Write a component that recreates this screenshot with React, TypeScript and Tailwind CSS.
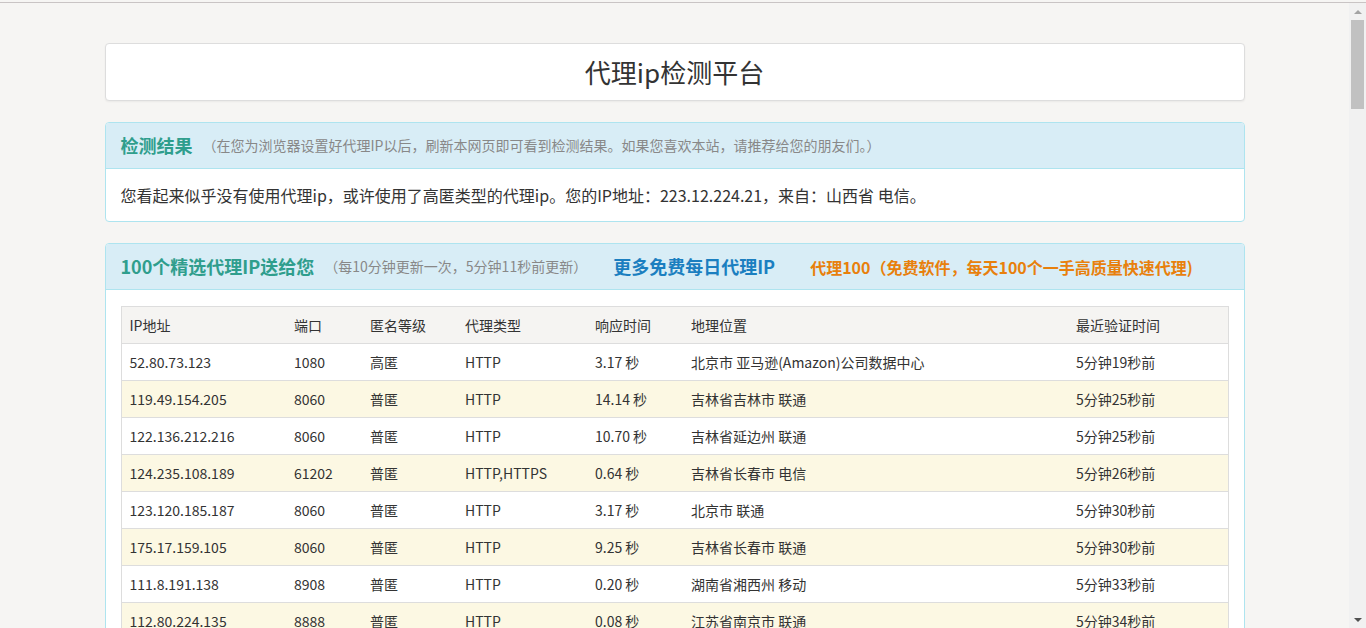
import React from 'react';

type ProxyRow = {
  ip: string;
  port: string;
  level: string;
  type: string;
  speed: string;
  location: string;
  checked: string;
};

const rows: ProxyRow[] = [
  { ip: '52.80.73.123', port: '1080', level: '高匿', type: 'HTTP', speed: '3.17 秒', location: '北京市 亚马逊(Amazon)公司数据中心', checked: '5分钟19秒前' },
  { ip: '119.49.154.205', port: '8060', level: '普匿', type: 'HTTP', speed: '14.14 秒', location: '吉林省吉林市 联通', checked: '5分钟25秒前' },
  { ip: '122.136.212.216', port: '8060', level: '普匿', type: 'HTTP', speed: '10.70 秒', location: '吉林省延边州 联通', checked: '5分钟25秒前' },
  { ip: '124.235.108.189', port: '61202', level: '普匿', type: 'HTTP,HTTPS', speed: '0.64 秒', location: '吉林省长春市 电信', checked: '5分钟26秒前' },
  { ip: '123.120.185.187', port: '8060', level: '普匿', type: 'HTTP', speed: '3.17 秒', location: '北京市 联通', checked: '5分钟30秒前' },
  { ip: '175.17.159.105', port: '8060', level: '普匿', type: 'HTTP', speed: '9.25 秒', location: '吉林省长春市 联通', checked: '5分钟30秒前' },
  { ip: '111.8.191.138', port: '8908', level: '普匿', type: 'HTTP', speed: '0.20 秒', location: '湖南省湘西州 移动', checked: '5分钟33秒前' },
  { ip: '112.80.224.135', port: '8888', level: '普匿', type: 'HTTP', speed: '0.08 秒', location: '江苏省南京市 联通', checked: '5分钟34秒前' },
  { ip: '221.210.120.153', port: '54402', level: '普匿', type: 'HTTP', speed: '1.12 秒', location: '黑龙江省哈尔滨市 联通', checked: '5分钟36秒前' },
  { ip: '117.88.176.38', port: '3000', level: '高匿', type: 'HTTP,HTTPS', speed: '2.05 秒', location: '江苏省南京市 电信', checked: '5分钟40秒前' },
];

const columns = [
  { label: 'IP地址', width: 'w-[165px]' },
  { label: '端口', width: 'w-[76px]' },
  { label: '匿名等级', width: 'w-[95px]' },
  { label: '代理类型', width: 'w-[130px]' },
  { label: '响应时间', width: 'w-[96px]' },
  { label: '地理位置', width: 'w-[385px]' },
  { label: '最近验证时间', width: 'w-[160px]' },
];

const Scrollbar: React.FC = () => (
  <div className="w-[17px] shrink-0 bg-[#f1f1f1] flex flex-col items-center">
    <div className="h-[17px] flex items-center justify-center">
      <div className="w-0 h-0 border-l-[4px] border-r-[4px] border-b-[4px] border-l-transparent border-r-transparent border-b-[#a3a3a3]" />
    </div>
    <div className="w-[13px] h-[89px] bg-[#c1c1c1]" />
    <div className="flex-1" />
    <div className="h-[17px] flex items-center justify-center">
      <div className="w-0 h-0 border-l-[4px] border-r-[4px] border-t-[4px] border-l-transparent border-r-transparent border-t-[#505050]" />
    </div>
  </div>
);

const App: React.FC = () => {
  return (
    <div
      className="h-[628px] overflow-hidden flex flex-col bg-[#f6f5f3] text-[#333]"
      style={{ fontFamily: '"Noto Sans CJK SC", "Noto Sans", sans-serif' }}
    >
      <div className="h-[2px] shrink-0" />
      <div className="h-px shrink-0 bg-[#c9c4c4]" />
      <div className="flex flex-1 min-h-0">
        <div className="flex-1 min-w-0 overflow-hidden">
          <div className="w-[1140px] mx-auto pt-[40px]">
            {/* Title */}
            <div className="h-[58px] bg-white border border-[#dddddd] rounded-[4px] shadow-[0_1px_2px_rgba(0,0,0,0.05)] flex items-center justify-center">
              <h1 className="text-[26px] leading-none text-[#333]">代理ip检测平台</h1>
            </div>

            {/* Detection result */}
            <div className="mt-[21px] bg-white border border-[#aee4ef] rounded-[4px] overflow-hidden">
              <div className="h-[46px] bg-[#d8edf6] border-b border-[#aee4ef] px-[15px] flex items-center">
                <span className="text-[18px] font-bold text-[#2f9e8d]">检测结果</span>
                <span className="ml-[10px] text-[14px] text-[#888]">（在您为浏览器设置好代理IP以后，刷新本网页即可看到检测结果。如果您喜欢本站，请推荐给您的朋友们。）</span>
              </div>
              <div className="h-[52px] px-[15px] flex items-center text-[16px] text-[#333]">
                您看起来似乎没有使用代理ip，或许使用了高匿类型的代理ip。您的IP地址：223.12.224.21，来自：山西省 电信。
              </div>
            </div>

            {/* Proxy list */}
            <div className="mt-[21px] bg-white border border-[#aee4ef] rounded-[4px] overflow-hidden">
              <div className="h-[46px] bg-[#d8edf6] border-b border-[#aee4ef] px-[15px] flex items-center">
                <span className="text-[18px] font-bold text-[#2f9e8d]">100个精选代理IP送给您</span>
                <span className="ml-[10px] text-[14px] text-[#888]">（每10分钟更新一次，5分钟11秒前更新）</span>
                <span className="ml-[26px] text-[18px] font-bold text-[#1b7fc0]">更多免费每日代理IP</span>
                <span className="ml-[35px] text-[16px] font-bold text-[#e8800c]">代理100（免费软件，每天100个一手高质量快速代理)</span>
              </div>
              <div className="px-[15px] pt-[16px] pb-[20px]">
                <table className="w-full border-collapse border border-[#dddddd] text-[14px] table-fixed">
                  <thead>
                    <tr className="bg-[#f5f4f2] h-[37px]">
                      {columns.map((c) => (
                        <th key={c.label} className={`${c.width} px-[8px] text-left font-normal text-[#333] border-b border-[#dddddd]`}>
                          {c.label}
                        </th>
                      ))}
                    </tr>
                  </thead>
                  <tbody>
                    {rows.map((r, i) => (
                      <tr key={r.ip} className={`h-[37px] border-t border-[#dddddd] ${i % 2 === 1 ? 'bg-[#fcf8e3]' : 'bg-white'}`}>
                        <td className="px-[8px]">{r.ip}</td>
                        <td className="px-[8px]">{r.port}</td>
                        <td className="px-[8px]">{r.level}</td>
                        <td className="px-[8px]">{r.type}</td>
                        <td className="px-[8px]">{r.speed}</td>
                        <td className="px-[8px]">{r.location}</td>
                        <td className="px-[8px]">{r.checked}</td>
                      </tr>
                    ))}
                  </tbody>
                </table>
              </div>
            </div>
          </div>
        </div>
        <Scrollbar />
      </div>
    </div>
  );
};

export default App;
